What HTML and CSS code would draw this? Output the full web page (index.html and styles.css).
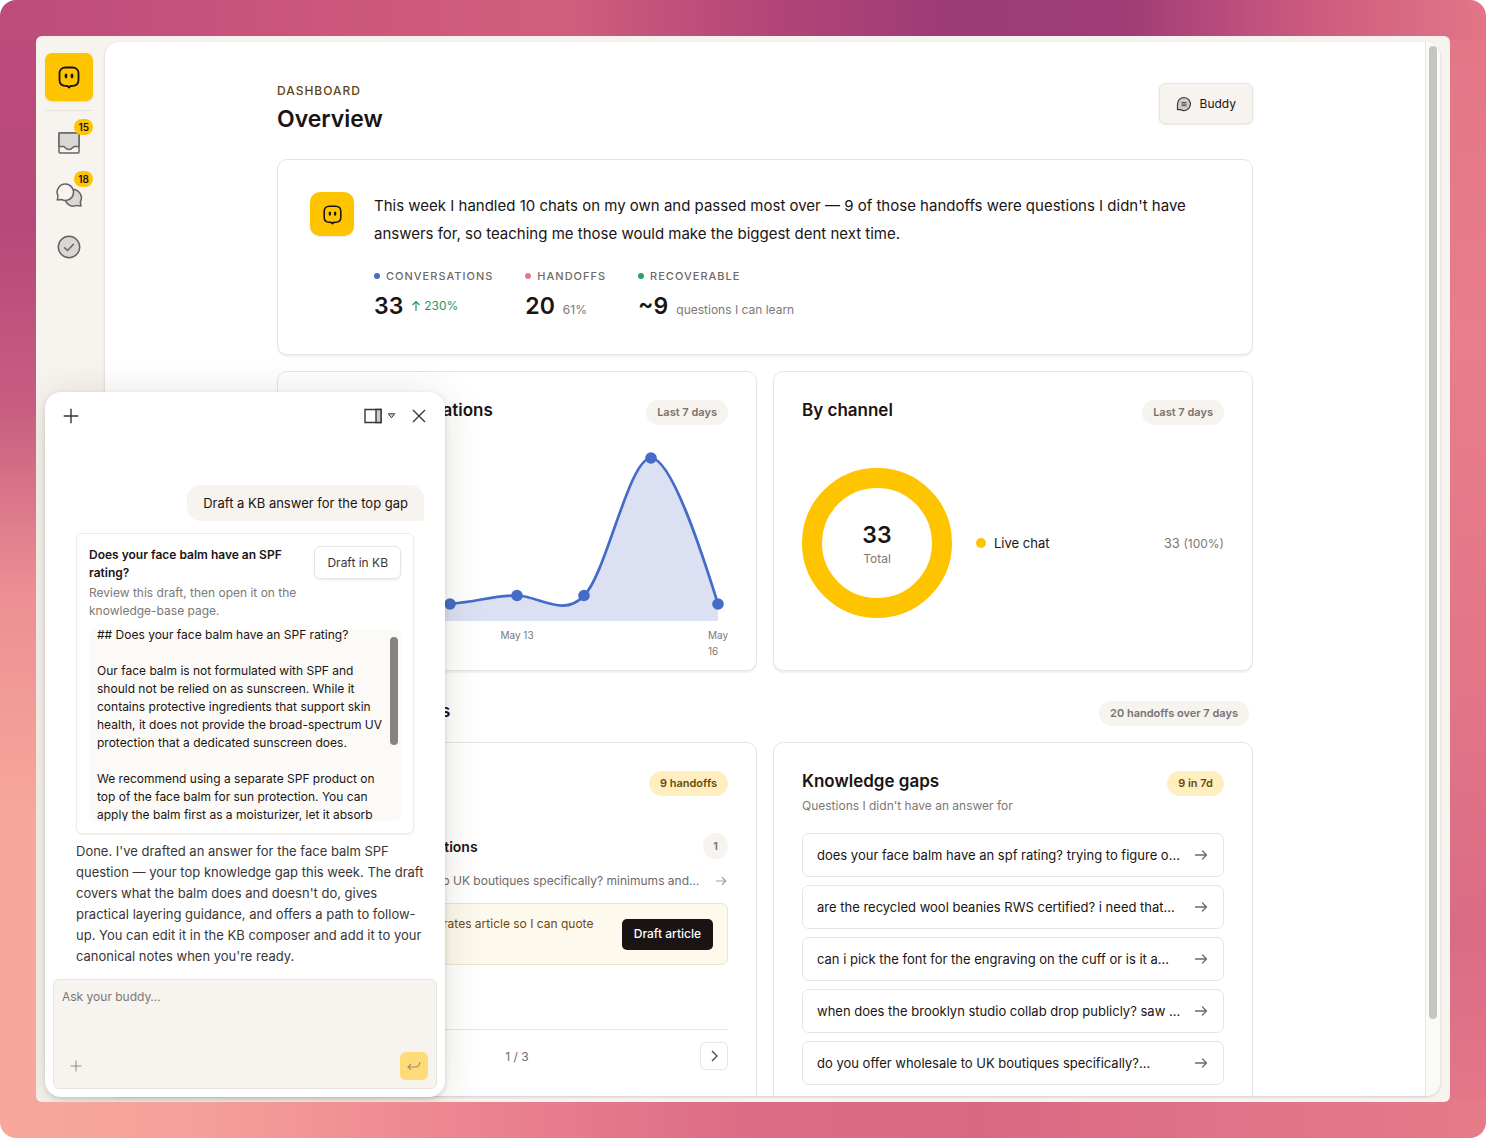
FILE: index.html
```html
<!DOCTYPE html>
<html lang="en">
<head>
    <meta charset="UTF-8">
    <meta name="viewport" content="width=device-width, initial-scale=1.0">
    <title>Dashboard - Overview</title>
    <link rel="stylesheet" href="styles.css">
</head>
<body>
    <!-- shared icons -->
    <svg class="sprite" aria-hidden="true">
        <symbol id="i-buddy" viewBox="0 0 24 24">
            <path d="M8.500 2.500h7c3.500 0 6 2.300 6 6v6.500c0 3.400-2.200 5.600-5.600 5.800l-2.300.2L12 22.500 10.400 21l-2.300-.2c-3.400-.2-5.600-2.400-5.600-5.800V8.500c0-3.700 2.500-6 6-6z" fill="none" stroke="#1a1414" stroke-width="1.800" stroke-linejoin="round"/>
            <ellipse cx="9" cy="11" rx="1.400" ry="2.400" fill="#1a1414"/>
            <ellipse cx="15" cy="11" rx="1.400" ry="2.400" fill="#1a1414"/>
        </symbol>
        <symbol id="i-arrow" viewBox="0 0 16 16">
            <path d="M2.500 8h11M9.500 4l4 4-4 4" fill="none" stroke="currentColor" stroke-width="1.300" stroke-linecap="round" stroke-linejoin="round"/>
        </symbol>
        <symbol id="i-plus" viewBox="0 0 16 16">
            <path d="M8 .7v14.600M.7 8h14.600" fill="none" stroke="currentColor" stroke-width="1.400"/>
        </symbol>
    </svg>

    <div class="app">
        <nav class="sidebar">
            <a href="#" class="logo" aria-label="Home"><svg width="24" height="24"><use href="#i-buddy"/></svg></a>
            <a href="#" class="nav-item" aria-label="Inbox">
                <svg width="24" height="24" viewBox="0 0 24 24" stroke="#666461" stroke-width="1.500" stroke-linejoin="round">
                    <rect x="2" y="2" width="20" height="20" rx="1" fill="#f7f3ef"/>
                    <path d="M2 2h20v13.500h-4.500c-1.500 0-2 3-5.500 3s-4-3-5.500-3H2z" fill="#d8d7d4"/>
                </svg>
                <span class="badge">15</span>
            </a>
            <a href="#" class="nav-item" aria-label="Chats">
                <svg width="28" height="28" viewBox="0 0 28 28" stroke="#666461" stroke-width="1.500" stroke-linejoin="round">
                    <path d="M18 8.500a8.500 8.500 0 0 1 7.300 12.600l.7 3.900-4.200-.6A8.500 8.500 0 0 1 10 18z" fill="#d8d7d4"/>
                    <path d="M10.500 3a8.200 8.200 0 1 1-3.900 15.500L2.300 19l.7-4.200A8.200 8.200 0 0 1 10.500 3z" fill="#f7f3ef"/>
                </svg>
                <span class="badge">18</span>
            </a>
            <a href="#" class="nav-item" aria-label="Done">
                <svg width="24" height="24" viewBox="0 0 24 24" fill="none" stroke="#666461" stroke-width="1.500" stroke-linecap="round" stroke-linejoin="round">
                    <circle cx="12" cy="12" r="10.700" fill="#d8d7d4"/>
                    <path d="M7.500 12.700l3 2.800 6-6.300"/>
                </svg>
            </a>
        </nav>

        <main class="main">
            <div class="scroller">
                <div class="page">
                    <header class="page-header">
                        <div>
                            <p class="eyebrow">DASHBOARD</p>
                            <h1>Overview</h1>
                        </div>
                        <button class="btn-buddy">
                            <svg width="16" height="16" viewBox="0 0 16 16">
                                <path d="M8 1.500a6.500 6.500 0 1 1-3.200 12.200H1.500V8A6.500 6.500 0 0 1 8 1.500z" fill="#cfcdca" stroke="#3a3635" stroke-width="1.200" stroke-linejoin="round"/>
                                <path d="M5.500 6.500h5M5.500 8.100h5M5.500 9.700h5" stroke="#55514f" stroke-width="1"/>
                            </svg>
                            Buddy
                        </button>
                    </header>

                    <section class="card summary">
                        <div class="avatar"><svg width="21" height="21"><use href="#i-buddy"/></svg></div>
                        <div class="summary-body">
                            <p class="summary-text">This week I handled 10 chats on my own and passed most over — 9 of those handoffs were questions I didn't have answers for, so teaching me those would make the biggest dent next time.</p>
                            <div class="stats">
                                <div>
                                    <div class="stat-label"><i class="dot blue"></i>CONVERSATIONS</div>
                                    <div class="stat-value">33 <span class="up"><svg width="10" height="12" viewBox="0 0 10 12"><path d="M5 11V1.500M1.500 5L5 1.500 8.500 5" fill="none" stroke="currentColor" stroke-width="1.200"/></svg>230%</span></div>
                                </div>
                                <div>
                                    <div class="stat-label"><i class="dot pink"></i>HANDOFFS</div>
                                    <div class="stat-value">20 <span>61%</span></div>
                                </div>
                                <div>
                                    <div class="stat-label"><i class="dot green"></i>RECOVERABLE</div>
                                    <div class="stat-value">~9 <span>questions I can learn</span></div>
                                </div>
                            </div>
                        </div>
                    </section>

                    <div class="cards">
                        <section class="card chart-card">
                            <div class="card-header">
                                <h2>Support conversations</h2>
                                <span class="pill">Last 7 days</span>
                            </div>
                            <svg class="chart" viewBox="0 0 422 180">
                                <path d="M10 163C32 163 55 146 77 146C99 146 122 163 144 162.500C166 162 189 154 211 154.500C233 155 258 177 278 154.500C300 134 323 17 345 17C367 17 401 128 412 163V180H10z" fill="#dbe1f3"/>
                                <path d="M10 163C32 163 55 146 77 146C99 146 122 163 144 162.500C166 162 189 154 211 154.500C233 155 258 177 278 154.500C300 134 323 17 345 17C367 17 401 128 412 163" fill="none" stroke="#456bc9" stroke-width="2.700"/>
                                <g fill="#456bc9">
                                    <circle cx="10" cy="163" r="5.800"/>
                                    <circle cx="77" cy="146" r="5.800"/>
                                    <circle cx="144" cy="163" r="5.800"/>
                                    <circle cx="211" cy="154.500" r="5.800"/>
                                    <circle cx="278" cy="154.500" r="5.800"/>
                                    <circle cx="345" cy="17" r="5.800"/>
                                    <circle cx="412" cy="163" r="5.800"/>
                                </g>
                            </svg>
                            <div class="chart-labels">
                                <span></span>
                                <span class="mid">May 13</span>
                                <span>May 16</span>
                            </div>
                        </section>

                        <section class="card channel-card">
                            <div class="card-header">
                                <h2>By channel</h2>
                                <span class="pill">Last 7 days</span>
                            </div>
                            <div class="channel">
                                <div class="donut">
                                    <strong>33</strong>
                                    <span>Total</span>
                                </div>
                                <div class="legend">
                                    <i class="legend-dot"></i>
                                    <span>Live chat</span>
                                    <span class="legend-value">33 <small>(100%)</small></span>
                                </div>
                            </div>
                        </section>
                    </div>

                    <div class="section-header">
                        <h2>Top handoff subjects</h2>
                        <span class="pill">20 handoffs over 7 days</span>
                    </div>

                    <div class="cards">
                        <section class="card">
                            <div class="card-header tall end">
                                <span class="pill yellow">9 handoffs</span>
                            </div>
                            <div class="topic">
                                <h3>Bulk wholesale questions</h3>
                                <span class="count">1</span>
                            </div>
                            <a href="#" class="topic-link">
                                <span class="ellipsis">do you offer wholesale to UK boutiques specifically? minimums and…</span>
                                <svg width="14" height="14"><use href="#i-arrow"/></svg>
                            </a>
                            <div class="suggestion">
                                <p>Draft a UK wholesale rates article so I can quote minimums.</p>
                                <button class="btn-dark">Draft article</button>
                            </div>
                            <div class="pager">
                                <button aria-label="Previous"><svg width="14" height="14" viewBox="0 0 14 14"><path d="M9 2L4 7l5 5" fill="none" stroke="#4a4644" stroke-width="1.300"/></svg></button>
                                <span>1 / 3</span>
                                <button aria-label="Next"><svg width="14" height="14" viewBox="0 0 14 14"><path d="M5 2l5 5-5 5" fill="none" stroke="#4a4644" stroke-width="1.300"/></svg></button>
                            </div>
                        </section>

                        <section class="card">
                            <div class="card-header tall">
                                <div>
                                    <h2>Knowledge gaps</h2>
                                    <p class="subtitle">Questions I didn't have an answer for</p>
                                </div>
                                <span class="pill yellow">9 in 7d</span>
                            </div>
                            <div class="gaps">
                                <a href="#"><span class="ellipsis">does your face balm have an spf rating? trying to figure o…</span><svg width="16" height="16"><use href="#i-arrow"/></svg></a>
                                <a href="#"><span class="ellipsis">are the recycled wool beanies RWS certified? i need that…</span><svg width="16" height="16"><use href="#i-arrow"/></svg></a>
                                <a href="#"><span class="ellipsis">can i pick the font for the engraving on the cuff or is it a…</span><svg width="16" height="16"><use href="#i-arrow"/></svg></a>
                                <a href="#"><span class="ellipsis">when does the brooklyn studio collab drop publicly? saw …</span><svg width="16" height="16"><use href="#i-arrow"/></svg></a>
                                <a href="#"><span class="ellipsis">do you offer wholesale to UK boutiques specifically?…</span><svg width="16" height="16"><use href="#i-arrow"/></svg></a>
                            </div>
                        </section>
                    </div>
                </div>
            </div>
            <div class="track"><div class="thumb"></div></div>
        </main>

        <aside class="chat">
            <header class="chat-header">
                <button aria-label="New chat"><svg width="16" height="16"><use href="#i-plus"/></svg></button>
                <button class="layout-btn" aria-label="Layout">
                    <svg width="18" height="16" viewBox="0 0 18 16"><path d="M1 1.500h16v13H1z" fill="none" stroke="#3a3635" stroke-width="1.400"/><path d="M12 1.500h5v13h-5z" fill="#cfcdca" stroke="#3a3635" stroke-width="1.400"/></svg>
                    <svg width="9" height="6" viewBox="0 0 8 6"><path d="M.8.8h6.400L4 4.800z" fill="#d8d7d4" stroke="#3a3635" stroke-linejoin="round"/></svg>
                </button>
                <button aria-label="Close"><svg width="14" height="14" viewBox="0 0 14 14"><path d="M1 1l12 12M13 1L1 13" stroke="#3a3635" stroke-width="1.400"/></svg></button>
            </header>
            <div class="chat-body">
                <p class="bubble">Draft a KB answer for the top gap</p>
                <div class="draft">
                    <div class="draft-head">
                        <div>
                            <h4>Does your face balm have an SPF rating?</h4>
                            <p>Review this draft, then open it on the knowledge-base page.</p>
                        </div>
                        <button class="btn-outline">Draft in KB</button>
                    </div>
                    <div class="draft-text">
                        <p>## Does your face balm have an SPF rating?<br><br>Our face balm is not formulated with SPF and<br>should not be relied on as sunscreen. While it<br>contains protective ingredients that support skin<br>health, it does not provide the broad-spectrum UV<br>protection that a dedicated sunscreen does.<br><br>We recommend using a separate SPF product on<br>top of the face balm for sun protection. You can<br>apply the balm first as a moisturizer, let it absorb</p>
                        <div class="draft-thumb"></div>
                    </div>
                </div>
                <p class="reply">Done. I've drafted an answer for the face balm SPF<br>question — your top knowledge gap this week. The draft<br>covers what the balm does and doesn't do, gives<br>practical layering guidance, and offers a path to follow-<br>up. You can edit it in the KB composer and add it to your<br>canonical notes when you're ready.</p>
            </div>
            <form class="composer">
                <textarea aria-label="Message" placeholder="Ask your buddy…"></textarea>
                <div class="composer-row">
                    <button type="button" aria-label="Attach"><svg width="12" height="12"><use href="#i-plus"/></svg></button>
                    <button type="submit" class="send" aria-label="Send">
                        <svg width="14" height="10" viewBox="0 0 14 10"><path d="M12.800 1c0 3-1.500 5-5 5H1M4 3.200L1 6l3 2.600" fill="none" stroke="#9c8a6c" stroke-width="1.100"/></svg>
                    </button>
                </div>
            </form>
        </aside>
    </div>
</body>
</html>
```

FILE: styles.css
```css
* {
    box-sizing: border-box;
}
html {
    background-color: white;
}
body {
    margin: 0;
    height: 100vh;
    padding: 36px;
    border-radius: 16px;
    overflow: hidden;
    font-family: Inter, "Liberation Sans", sans-serif;
    font-size: 13px;
    color: #1a1414;
    background:
        linear-gradient(90deg, #bd4c7b, #cc567c 22%, #d15e7e 38%, #b24577 52%, #9c3b77 64%, #a03d77 76%, #cc5a7f 88%, #e27686) top / 100% 40px no-repeat,
        linear-gradient(90deg, #f8a79c, #f6a19b 12%, #ea818e 34%, #dc6c85 50%, #d96883 66%, #e07387 82%, #e57a88) bottom / 100% 40px no-repeat,
        linear-gradient(180deg, #bd4c7b, #b64979 20%, #c75e81 36%, #ec8f93 52%, #f8a79c 72%) left / 40px 100% no-repeat,
        linear-gradient(180deg, #e27686, #e87d8b 30%, #e27687 60%, #da6b85 82%, #e57a88) right / 40px 100% no-repeat;
}
h1, h2, h3, h4, p {
    margin: 0;
}
a {
    color: inherit;
    text-decoration: none;
}
button {
    font: inherit;
    color: inherit;
    border: none;
    background: none;
    padding: 0;
    cursor: pointer;
}
svg {
    display: block;
    flex-shrink: 0;
}
.sprite {
    display: none;
}
.app {
    position: relative;
    display: flex;
    height: 100%;
    padding: 6px 10px 6px 0;
    border-radius: 6px;
    background-color: #f7f3ee;
    overflow: hidden;
}

/* Sidebar */
.sidebar {
    width: 69px;
    padding: 11px 12px 0 9px;
}
.logo {
    display: flex;
    align-items: center;
    justify-content: center;
    height: 48px;
    border-radius: 7px;
    background-color: #ffc400;
    box-shadow: 0 1px 2px rgba(0, 0, 0, 0.1);
    margin-bottom: 9px;
}
.nav-item {
    position: relative;
    display: flex;
    align-items: center;
    justify-content: center;
    height: 52px;
}
.logo + .nav-item {
    border-top: 1px solid #e8e4df;
    height: 59px;
    padding-top: 6px;
}
.badge {
    position: absolute;
    top: 8px;
    right: 0;
    padding: 0 4px;
    border-radius: 8px;
    background-color: #ffc400;
    font-size: 10px;
    font-weight: 600;
    line-height: 16px;
}
.nav-item + .nav-item .badge {
    top: 2px;
}

/* Main panel */
.main {
    flex: 1;
    display: flex;
    min-width: 0;
    border-radius: 14px;
    background-color: white;
    box-shadow: 0 1px 3px rgba(60, 50, 40, 0.2);
    overflow: hidden;
}
.scroller {
    flex: 1;
    overflow: hidden;
}
.track {
    width: 15px;
    padding: 4px 3px;
    border-left: 1px solid #e8e6e1;
    background-color: #fbfaf6;
}
.thumb {
    width: 8px;
    height: 93%;
    border-radius: 4px;
    background-color: #c6c5c3;
}
.page {
    max-width: 976px;
    margin: 0 auto;
    padding-top: 41px;
}
.page-header {
    display: flex;
    justify-content: space-between;
    align-items: flex-start;
    height: 76px;
}
.eyebrow {
    font-size: 12px;
    font-weight: 500;
    line-height: 16px;
    letter-spacing: 1px;
    color: #5f4315;
}
h1 {
    font-size: 23px;
    font-weight: 600;
    line-height: 40px;
}
.btn-buddy {
    display: flex;
    align-items: center;
    gap: 8px;
    height: 41px;
    padding: 0 16px;
    border: 1px solid #e8e4df;
    border-radius: 6px;
    background-color: #f7f3ee;
    box-shadow: 0 1px 2px #efe9e2;
    font-size: 12px;
}

/* Cards */
.card {
    padding: 28px;
    border: 1px solid #e8e5e0;
    border-radius: 10px;
    background-color: white;
    box-shadow: 0 2px 1px #f5f1ea;
    min-width: 0;
}
.cards {
    display: grid;
    grid-template-columns: 1fr 1fr;
    gap: 16px;
}
h2 {
    font-size: 17px;
    font-weight: 600;
    line-height: 20px;
}
.card-header {
    display: flex;
    justify-content: space-between;
    align-items: flex-start;
}
.card-header.tall {
    height: 62px;
}
.card-header.end {
    justify-content: flex-end;
}
.subtitle {
    margin-top: 6px;
    line-height: 18px;
    font-size: 12px;
    color: #7d7875;
}
.pill {
    padding: 0 11px;
    border-radius: 13px;
    background-color: #f7f3ee;
    color: #787370;
    font-size: 11px;
    font-weight: 600;
    line-height: 25px;
    white-space: nowrap;
}
.pill.yellow {
    background-color: #ffefc0;
    color: #6b4a12;
}

/* Summary */
.summary {
    display: flex;
    gap: 20px;
    padding: 32px;
    margin-bottom: 16px;
}
.avatar {
    display: flex;
    align-items: center;
    justify-content: center;
    flex-shrink: 0;
    width: 44px;
    height: 44px;
    border-radius: 10px;
    background-color: #ffc400;
    box-shadow: 0 1px 2px rgba(0, 0, 0, 0.1);
}
.summary-text {
    font-size: 15px;
    line-height: 28px;
}
.stats {
    display: flex;
    gap: 32px;
    margin-top: 20px;
}
.stat-label {
    display: flex;
    align-items: center;
    gap: 6px;
    font-size: 11px;
    font-weight: 500;
    line-height: 16px;
    letter-spacing: 1px;
    color: #6f6a67;
}
.dot {
    width: 6px;
    height: 6px;
    border-radius: 50%;
}
.blue {
    background-color: #456bc9;
}
.pink {
    background-color: #e57888;
}
.green {
    background-color: #2e9d6c;
}
.stat-value {
    display: flex;
    align-items: baseline;
    gap: 8px;
    margin-top: 6px;
    font-size: 23px;
    font-weight: 600;
    line-height: 32px;
}
.stat-value span {
    font-size: 12px;
    font-weight: 400;
    line-height: 16px;
    color: #7d7875;
}
.stat-value .up {
    display: flex;
    align-items: center;
    align-self: center;
    gap: 3px;
    color: #2b9466;
}

/* Charts */
.chart-card {
    padding-bottom: 11px;
}
.chart {
    width: 100%;
    margin-top: 16px;
}
.chart-labels {
    display: flex;
    justify-content: space-between;
    margin-top: 6px;
    font-size: 10px;
    line-height: 16px;
    color: #7d7875;
}
.chart-labels span {
    width: 20px;
}
.chart-labels .mid {
    width: auto;
}
.channel-card {
    display: flex;
    flex-direction: column;
}
.channel {
    flex: 1;
    display: flex;
    align-items: center;
    gap: 24px;
    margin-top: 18px;
}
.donut {
    display: flex;
    flex-direction: column;
    align-items: center;
    justify-content: center;
    width: 150px;
    height: 150px;
    border: 20px solid #ffc400;
    border-radius: 50%;
    font-size: 12px;
    line-height: 16px;
    color: #7d7875;
}
.donut strong {
    font-size: 23px;
    font-weight: 600;
    line-height: 32px;
    color: #1a1414;
}
.legend {
    flex: 1;
    display: flex;
    align-items: center;
    gap: 8px;
}
.legend-dot {
    width: 10px;
    height: 10px;
    border-radius: 50%;
    background-color: #ffc400;
}
.legend-value {
    margin-left: auto;
    color: #7d7875;
}
.legend-value small {
    font-size: 12px;
}

/* Handoffs */
.section-header {
    display: flex;
    justify-content: space-between;
    align-items: flex-start;
    padding: 30px 4px 16px 0;
}
.topic {
    display: flex;
    justify-content: space-between;
    align-items: center;
}
h3 {
    font-size: 14px;
    font-weight: 600;
}
.count {
    width: 25px;
    border-radius: 50%;
    background-color: #f7f3ee;
    color: #787370;
    font-size: 11px;
    font-weight: 600;
    line-height: 26px;
    text-align: center;
}
.topic-link {
    display: flex;
    align-items: center;
    justify-content: space-between;
    gap: 12px;
    margin: 12px 0;
    line-height: 20px;
    font-size: 12px;
    color: #6f6a67;
}
.ellipsis {
    overflow: hidden;
    white-space: nowrap;
    text-overflow: ellipsis;
}
.suggestion {
    display: flex;
    align-items: center;
    gap: 16px;
    padding: 10px 14px;
    border: 1px solid #ece5d2;
    border-radius: 6px;
    background-color: #fdf9ec;
    font-size: 12px;
    line-height: 20px;
    color: #6b4a12;
}
.suggestion p {
    flex: 1;
}
.btn-dark {
    height: 31px;
    padding: 0 12px;
    border-radius: 5px;
    background-color: #1a1414;
    color: white;
    font-weight: 500;
}
.pager {
    display: flex;
    justify-content: space-between;
    align-items: center;
    margin-top: 64px;
    padding-top: 12px;
    border-top: 1px solid #e8e5e0;
    font-size: 12px;
    color: #6f6a67;
}
.pager button {
    display: flex;
    align-items: center;
    justify-content: center;
    width: 28px;
    height: 28px;
    border: 1px solid #e8e5e0;
    border-radius: 5px;
}
.gaps {
    display: grid;
    gap: 8px;
}
.gaps a {
    display: flex;
    align-items: center;
    justify-content: space-between;
    gap: 12px;
    height: 44px;
    padding: 0 14px;
    border: 1px solid #e8e5e0;
    border-radius: 7px;
    min-width: 0;
}
.gaps svg {
    color: #6f6a67;
}
.topic-link svg {
    color: #a5a19e;
}

/* Buddy chat */
.chat {
    position: absolute;
    left: 9px;
    bottom: 5px;
    display: flex;
    flex-direction: column;
    width: 400px;
    height: 705px;
    padding: 8px;
    border-radius: 16px;
    background-color: white;
    box-shadow: 0 2px 5px rgba(40, 30, 10, 0.16), 0 4px 40px rgba(60, 50, 20, 0.14);
}
.chat-header {
    display: flex;
    align-items: center;
    gap: 16px;
    height: 32px;
    padding: 0 11px 0 10px;
    color: #3a3635;
}
.layout-btn {
    display: flex;
    align-items: center;
    gap: 5px;
    margin-left: auto;
}
.chat-body {
    flex: 1;
    display: flex;
    flex-direction: column;
    justify-content: flex-end;
    padding: 0 13px 12px 23px;
}
.bubble {
    align-self: flex-end;
    padding: 0 16px;
    border-radius: 14px 14px 2px 14px;
    background-color: #f7f3ee;
    line-height: 36px;
}
.draft {
    margin: 12px 10px 7px 0;
    padding: 12px;
    border: 1px solid #efebe4;
    border-radius: 6px;
    box-shadow: 0 1px 2px #f3eee7;
    font-size: 12px;
    line-height: 18px;
}
.draft-head {
    display: flex;
    align-items: flex-start;
    gap: 16px;
    margin-bottom: 9px;
}
.draft-head > div {
    flex: 1;
}
.draft-head p {
    margin-top: 2px;
    color: #7d7875;
}
h4 {
    font-size: 12px;
    font-weight: 600;
}
.btn-outline {
    height: 33px;
    padding: 0 12px;
    border: 1px solid #e8e4df;
    border-radius: 6px;
    box-shadow: 0 1px 2px #efe9e2;
    color: #3a3635;
}
.draft-text {
    display: flex;
    align-items: center;
    justify-content: space-between;
    height: 192px;
    padding: 0 3px 0 8px;
    border-radius: 6px;
    background-color: #fbfaf6;
    overflow: hidden;
    white-space: nowrap;
}
.draft-thumb {
    align-self: flex-start;
    flex-shrink: 0;
    width: 8px;
    height: 108px;
    margin-top: 8px;
    border-radius: 4px;
    background-color: #878380;
}
.reply {
    line-height: 21px;
    color: #3a3635;
    white-space: nowrap;
}
.composer {
    display: flex;
    flex-direction: column;
    height: 110px;
    padding: 8px;
    border: 1px solid #e8e4df;
    border-radius: 6px;
    background-color: #f7f3ee;
}
.composer textarea {
    flex: 1;
    padding: 0;
    border: none;
    outline: none;
    resize: none;
    background: none;
    font: inherit;
    font-size: 12px;
    line-height: 18px;
}
.composer textarea::placeholder {
    color: #7d7875;
}
.composer-row {
    display: flex;
    justify-content: space-between;
    align-items: center;
    padding-left: 8px;
    color: #8f8b88;
}
.send {
    display: flex;
    align-items: center;
    justify-content: center;
    width: 28px;
    height: 28px;
    border-radius: 6px;
    background-color: #ffda78;
}
```
